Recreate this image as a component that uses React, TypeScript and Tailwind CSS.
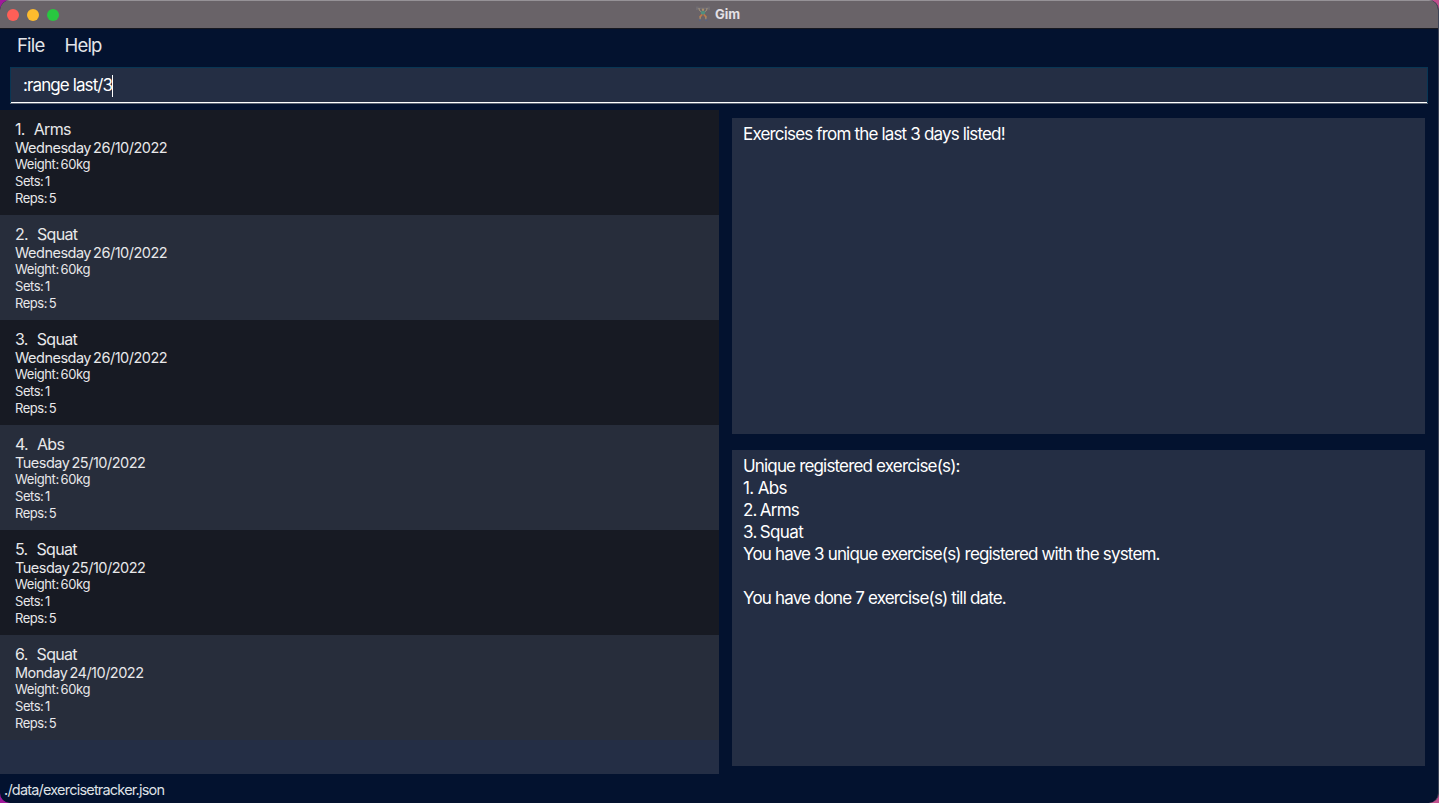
const exercises = [
  { name: "Arms", date: "Wednesday 26/10/2022" },
  { name: "Squat", date: "Wednesday 26/10/2022" },
  { name: "Squat", date: "Wednesday 26/10/2022" },
  { name: "Abs", date: "Tuesday 25/10/2022" },
  { name: "Squat", date: "Tuesday 25/10/2022" },
  { name: "Squat", date: "Monday 24/10/2022" },
];

function Lifter() {
  return (
    <svg width="14" height="15" viewBox="0 0 14 15" fill="none" strokeLinecap="round">
      <path d="M1.2 2.2H12.8" stroke="#85838a" strokeWidth="0.6" />
      <path d="M.7 1v2.6M1.9 .7v2.8M12.1 .7v2.8M13.3 1v2.6" stroke="#77757b" strokeWidth="0.7" />
      <path d="M3 2.4 3.4 4.4 5 5.6M11 2.4 10.6 4.4 9 5.6" stroke="#a8977c" strokeWidth="1" />
      <circle cx="7" cy="3.8" r="1.2" fill="#a8906c" />
      <path d="M4.7 5.2h4.6L8.8 8.8H5.2z" fill="#4f8f7e" />
      <path d="M5.7 9 4.2 10.6M8.3 9 9.8 10.6" stroke="#bd7748" strokeWidth="1.8" />
      <path d="M4.1 11v2M9.9 11v2" stroke="#b39a6f" strokeWidth="1" />
      <path d="M3.4 14h1M9.7 14h1.2" stroke="#4a639a" strokeWidth="1" />
    </svg>
  );
}

export default function App() {
  return (
    <div className="h-[803px] w-[1439px] overflow-hidden bg-[linear-gradient(90deg,#a01a9a,#c04f8c)] font-['Inter','Liberation_Sans',sans-serif]">
      <div className="flex h-full flex-col overflow-hidden rounded-[10px] border-r border-[#3f4658] bg-[#03122f]">
        <header className="grid h-[29px] shrink-0 grid-cols-[1fr_auto_1fr] items-center border-t border-b border-t-[#969297] border-b-[#17181f] bg-[#696368] pr-[2px] pl-[7px]">
          <div className="flex gap-2">
            <span className="size-3 rounded-full bg-[#ff5f57]" />
            <span className="size-3 rounded-full bg-[#febc2e]" />
            <span className="size-3 rounded-full bg-[#28c840]" />
          </div>
          <div className="-ml-[7px] flex items-center gap-[5px] pb-[2px] text-[13px] leading-4 font-bold tracking-[0px] text-[#e4e0e5]">
            <Lifter />
            <span>Gim</span>
          </div>
        </header>

        <nav className="flex h-[38px] shrink-0 gap-5 pt-1 pl-[17px] text-[18.5px] leading-6 tracking-[-0.8px] text-[#e3e5e9]">
          <span>File</span>
          <span>Help</span>
        </nav>

        <div className="mr-[10px] ml-[10px] flex h-9 shrink-0 items-center border border-b-0 border-[#083654] bg-[#242e44] pl-3 text-[17px] tracking-[-0.9px] text-white shadow-[0_1px_0_#5d6675,inset_0_-1px_0_#fff]">
          <span>:range last/3</span>
          <span className="h-[22px] w-px bg-white" />
        </div>

        <main className="flex h-[671px] shrink-0 pt-[7px]">
          <section className="w-[719px] bg-[#242e45] text-[#e8e8ea]">
            {exercises.map((item, i) => (
              <article key={i} className="h-[105px] bg-[#272d3b] pt-2.5 pl-[15px] odd:bg-[#171a23]">
                <h2 className="flex h-[18px] gap-[9px] text-[16px] leading-[18px] tracking-[-0.7px]">
                  <span>{i + 1}.</span>
                  <span>{item.name}</span>
                </h2>
                <p className="h-[18px] text-[14.5px] leading-[19px] tracking-[-0.5px] [word-spacing:-1.5px]">{item.date}</p>
                <p className="text-[13px] leading-[17px] tracking-[-0.4px] [word-spacing:-1.5px]">Weight: 60kg</p>
                <p className="text-[13px] leading-[17px] tracking-[-0.45px] [word-spacing:-1.5px]">Sets: 1</p>
                <p className="text-[13px] leading-[17px] tracking-[-0.45px] [word-spacing:-1.5px]">Reps: 5</p>
              </article>
            ))}
          </section>
          <section className="flex flex-1 flex-col gap-4 pt-2 pr-[13px] pb-2 pl-[13px] text-[17px] leading-[22px] tracking-[-0.83px] text-white">
            <div className="h-[316px] bg-[#242e44] pt-[5px] pl-[11px]">Exercises from the last 3 days listed!</div>
            <div className="h-[316px] bg-[#242e44] pt-[5px] pl-[11px]">
              <p>Unique registered exercise(s):</p>
              <p className="tracking-[-0.65px]">1. Abs</p>
              <p className="tracking-[-0.75px] [word-spacing:-1px]">2. Arms</p>
              <p className="tracking-[-0.65px] [word-spacing:-1px]">3. Squat</p>
              <p>You have 3 unique exercise(s) registered with the system.</p>
              <p className="mt-[22px]">You have done 7 exercise(s) till date.</p>
            </div>
          </section>
        </main>

        <footer className="flex-1 pt-[6px] pl-1 text-[14.5px] leading-5 tracking-[-0.8px] text-[#dfe1e6]">./data/exercisetracker.json</footer>
      </div>
    </div>
  );
}
